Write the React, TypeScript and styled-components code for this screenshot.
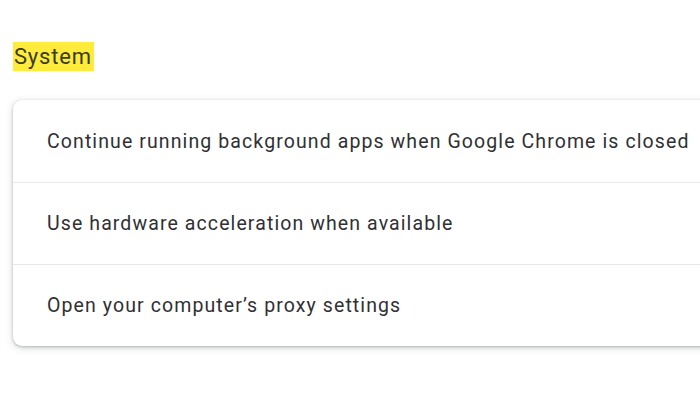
import React from "react";
import styled, { createGlobalStyle } from "styled-components";

const Global = createGlobalStyle`
  html, body { margin: 0; padding: 0; background: #ffffff; }
  body { font-family: Roboto, "Noto Sans", sans-serif; }
`;

const Page = styled.div`
  width: 700px;
  height: 400px;
  overflow: hidden;
  padding: 42px 0 0 13px;
  box-sizing: border-box;
`;

const Heading = styled.h2`
  margin: 0;
  display: inline-block;
  background: #ffeb3b;
  color: #3b3b1e;
  font-size: 22px;
  font-weight: 400;
  line-height: 29px;
  letter-spacing: 0.8px;
  padding: 0 2px 0 1px;
`;

const Card = styled.div`
  margin-top: 29px;
  width: 720px;
  background: #fff;
  border-radius: 9px;
  box-shadow: 0 1px 3px rgba(60, 64, 67, 0.3), 0 2px 7px 1px rgba(60, 64, 67, 0.15);
`;

const Row = styled.div<{ $first?: boolean }>`
  height: 82px;
  display: flex;
  align-items: center;
  padding-left: 34px;
  border-top: ${(p) => (p.$first ? "none" : "1px solid #e8e8e8")};
  box-sizing: border-box;
  font-size: 19.5px;
  letter-spacing: 1.1px;
  white-space: nowrap;
  color: #303034;
`;

export default function App() {
  return (
    <>
      <Global />
      <Page>
        <Heading>System</Heading>
        <Card>
          <Row $first>Continue running background apps when Google Chrome is closed</Row>
          <Row>Use hardware acceleration when available</Row>
          <Row>Open your computer’s proxy settings</Row>
        </Card>
      </Page>
    </>
  );
}
